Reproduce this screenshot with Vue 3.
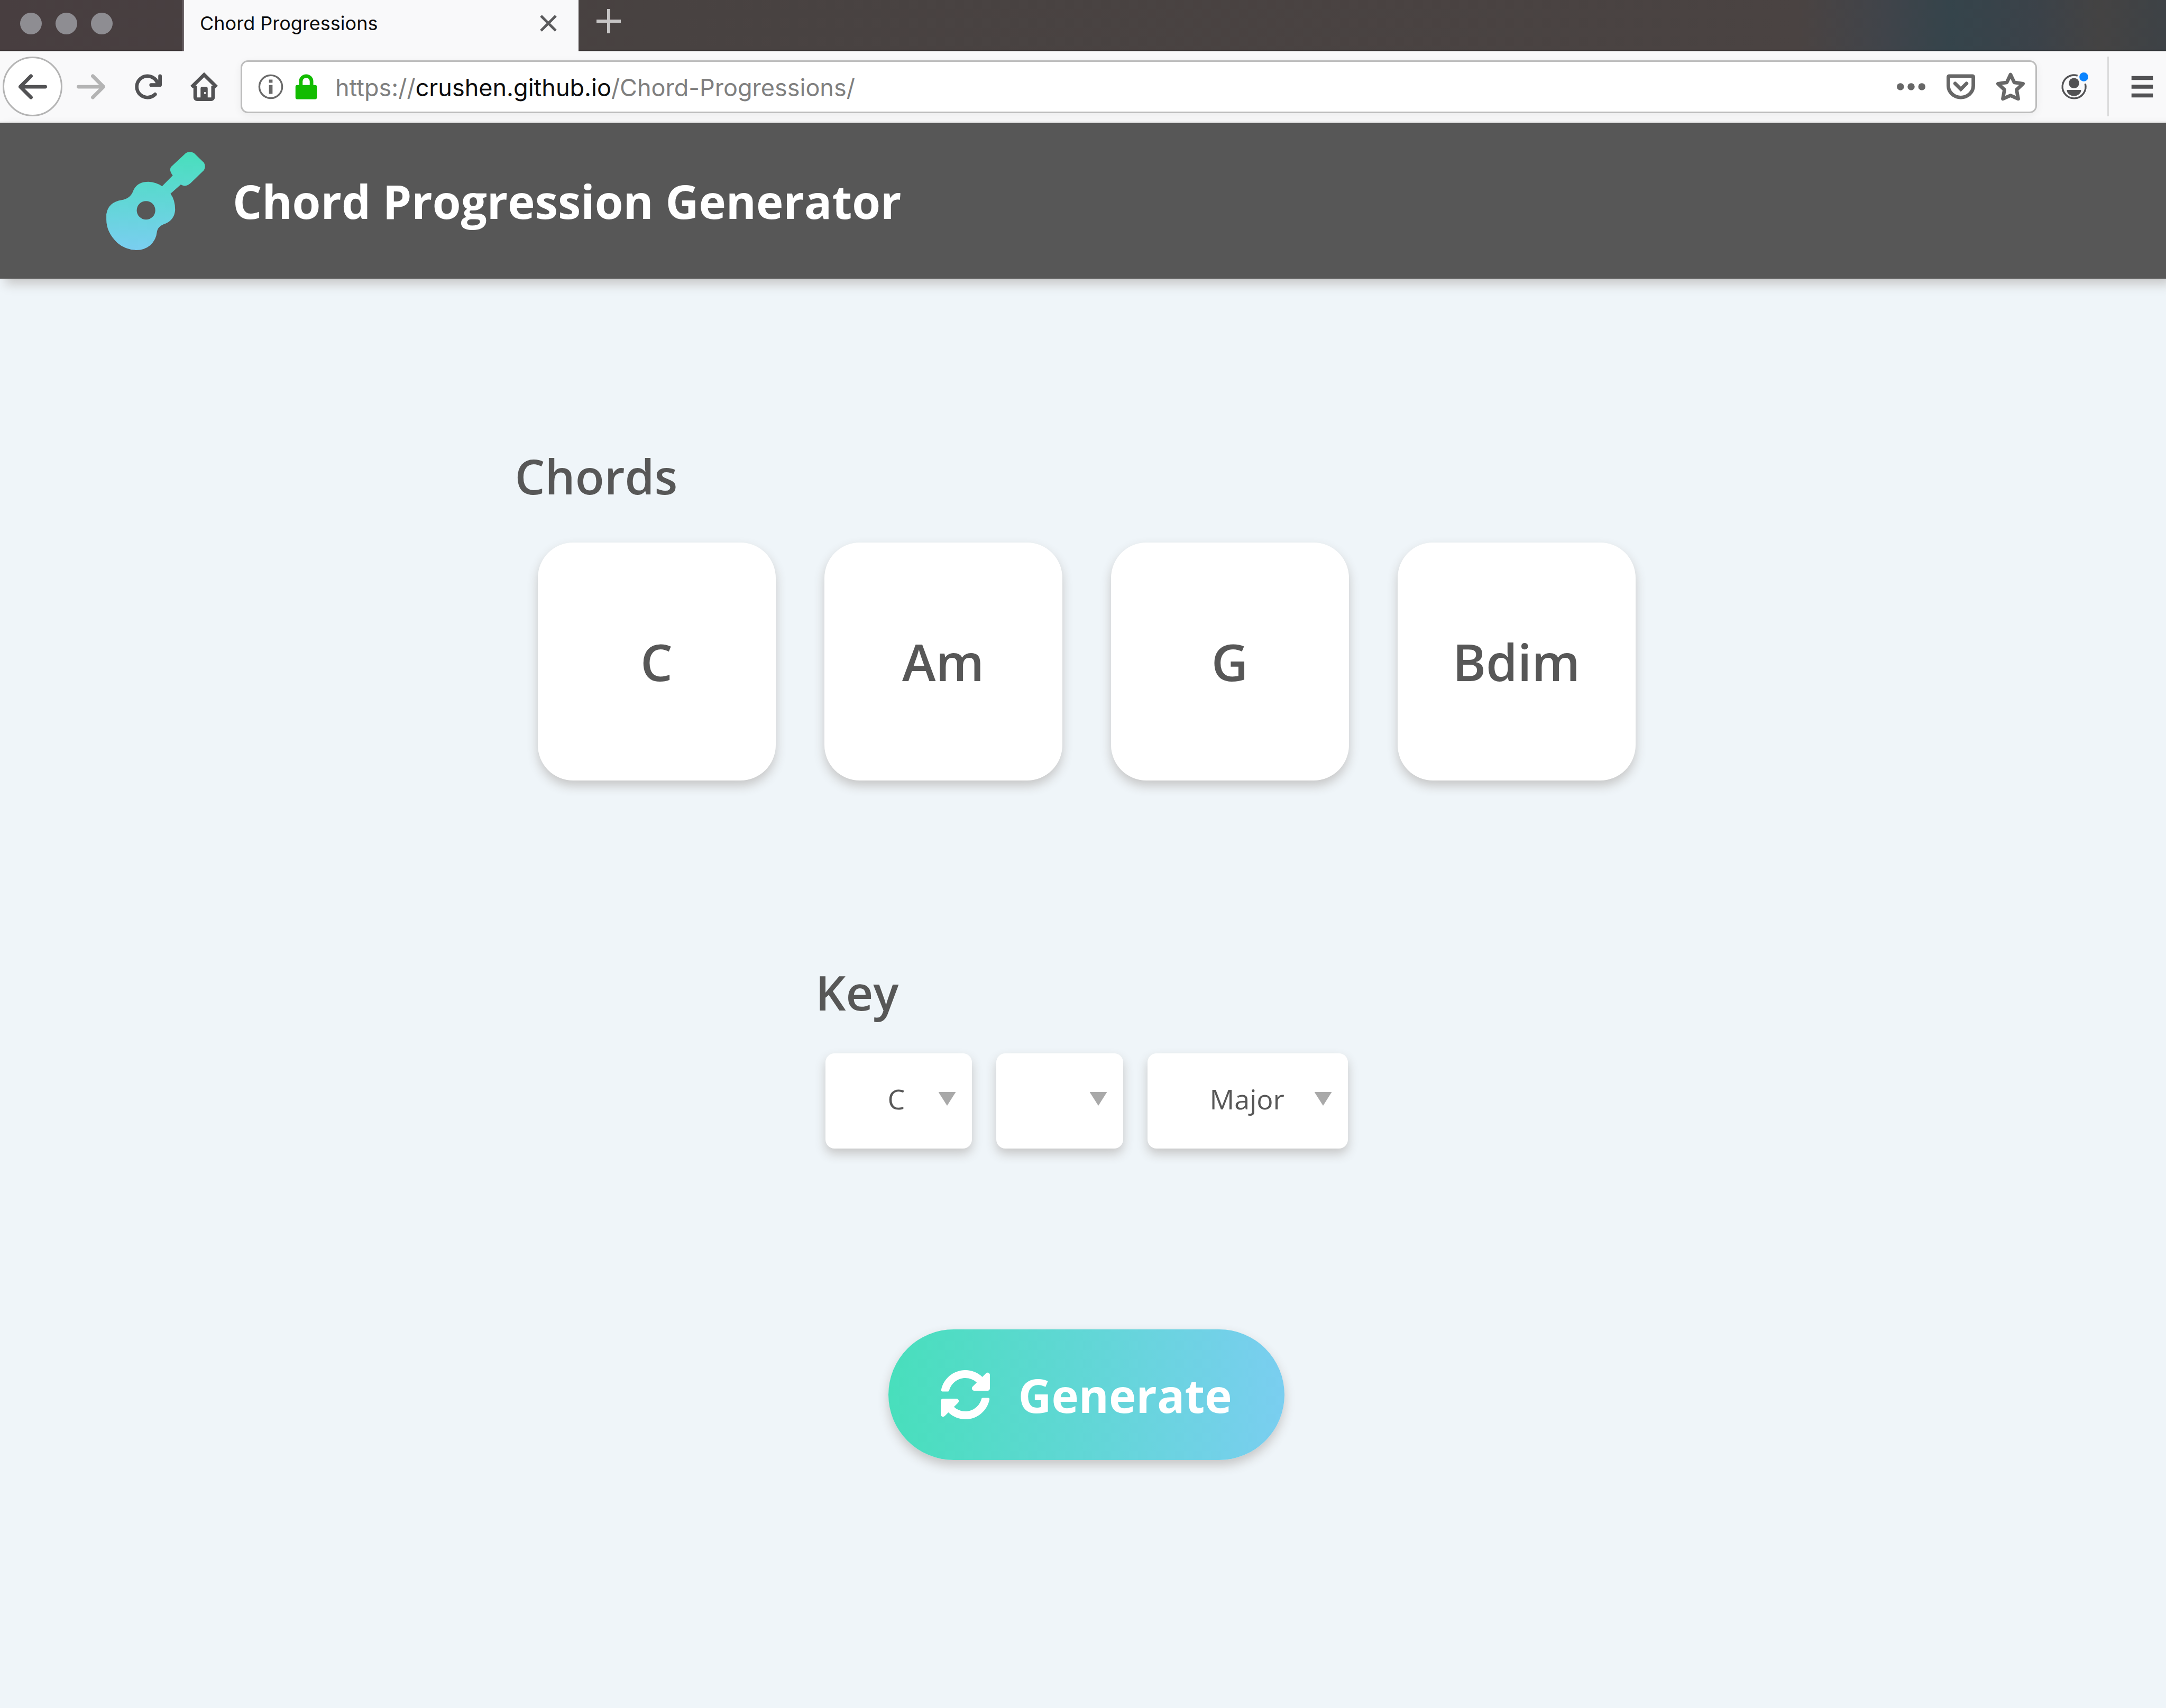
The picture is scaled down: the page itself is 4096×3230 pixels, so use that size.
<script setup>
import { ref } from 'vue'

const chords = ref(['C', 'Am', 'G', 'Bdim'])
const note = ref('C')
const accidental = ref('')
const mode = ref('Major')

const notes = ['A', 'B', 'C', 'D', 'E', 'F', 'G']
const accidentals = ['', '♯', '♭']
const modes = ['Major', 'Minor']
</script>

<template>
  <div class="window">
    <div class="tabbar">
      <div class="lights"><span></span><span></span><span></span></div>
      <div class="tab">
        <span class="tab-title">Chord Progressions</span>
        <button class="plain" aria-label="Close tab">
          <svg class="close" viewBox="0 0 34 34"><path d="M3 3 31 31M31 3 3 31" /></svg>
        </button>
      </div>
      <button class="plain add" aria-label="New tab">
        <svg class="plus" viewBox="0 0 48 48"><path d="M24 1V47M1 24H47" /></svg>
      </button>
    </div>

    <div class="toolbar">
      <button class="plain back" aria-label="Back">
        <svg class="icon" viewBox="0 0 16 16"><path d="M15 7H3.414l4.293-4.293a1 1 0 0 0-1.414-1.414l-6 6a1 1 0 0 0 0 1.414l6 6a1 1 0 0 0 1.414-1.414L3.414 9H15a1 1 0 0 0 0-2z" /></svg>
      </button>
      <button class="plain tool dim" aria-label="Forward">
        <svg class="icon" viewBox="0 0 16 16"><path d="M1 7h11.586L8.293 2.707a1 1 0 0 1 1.414-1.414l6 6a1 1 0 0 1 0 1.414l-6 6a1 1 0 0 1-1.414-1.414L12.586 9H1a1 1 0 0 1 0-2z" /></svg>
      </button>
      <button class="plain tool" aria-label="Reload">
        <svg class="icon" viewBox="0 0 16 16"><path d="M15 1a1 1 0 0 0-1 1v2.418A6.995 6.995 0 1 0 8 15a6.954 6.954 0 0 0 4.95-2.05 1 1 0 0 0-1.414-1.414A5.019 5.019 0 1 1 12.549 6H10a1 1 0 0 0 0 2h5a1 1 0 0 0 1-1V2a1 1 0 0 0-1-1z" /></svg>
      </button>
      <button class="plain tool" aria-label="Home">
        <svg class="icon" viewBox="0 0 16 16">
          <path class="line" d="M1 8.200 8 1.300 15 8.200M3 7.500V14a1 1 0 0 0 1 1h8a1 1 0 0 0 1-1V7.500" />
          <path fill-rule="evenodd" d="M6 15V9a1 1 0 0 1 1-1h2a1 1 0 0 1 1 1v6zM8 11v1h1v-1z" />
        </svg>
      </button>

      <div class="address">
        <svg class="icon info" viewBox="0 0 16 16">
          <circle cx="8" cy="8" r="6.400" />
          <path d="M8 4v1.800M8 7v5" />
        </svg>
        <svg class="icon lock" viewBox="0 0 16 16">
          <path d="M2 8a1 1 0 0 1 1-1h1V5a4 4 0 0 1 8 0v2h1a1 1 0 0 1 1 1v6a1 1 0 0 1-1 1H3a1 1 0 0 1-1-1zM6 7h4V5a2 2 0 0 0-4 0z" fill-rule="evenodd" />
        </svg>
        <div class="url" role="textbox" aria-label="Address" tabindex="0">https://<b>crushen.github.io</b>/Chord-Progressions/</div>
        <svg class="icon soft" viewBox="0 0 16 16"><circle cx="2" cy="8" r="2" /><circle cx="8" cy="8" r="2" /><circle cx="14" cy="8" r="2" /></svg>
        <svg class="icon soft" viewBox="0 0 16 16">
          <path class="line" d="M1.500 2h13a.5.5 0 0 1 .5.5V7.500a7 6.500 0 0 1-14 0V2.500a.5.5 0 0 1 .5-.5z" />
          <path class="line" d="M4.800 6.200 8 9.400l3.200-3.200" stroke-linecap="round" />
        </svg>
        <svg class="icon soft" viewBox="0 0 16 16">
          <path class="line" d="M8 1.200 10.100 5.600 15 6.300 11.400 9.700 12.300 14.800 8 12.900 3.700 14.800 4.600 9.700 1 6.300 5.900 5.600Z" stroke-linejoin="round" />
        </svg>
      </div>

      <button class="plain tool account" aria-label="Account">
        <svg class="icon" viewBox="0 0 16 16">
          <path class="thin" d="M10 1.800A6.500 6.500 0 1 0 14.300 6.300" />
          <circle cx="8" cy="6" r="2.900" />
          <path d="M4 9.800h8c0 2-1.800 3.400-4 3.400S4 11.800 4 9.800z" />
          <circle class="dot" cx="13.500" cy="2.500" r="2.500" />
        </svg>
      </button>
      <span class="rule"></span>
      <button class="plain menu" aria-label="Menu">
        <svg class="icon" viewBox="0 0 16 16"><path d="M2 2h12v2.200H2zM2 6.900h12v2.200H2zM2 11.800h12V14H2z" /></svg>
      </button>
    </div>

    <header class="header">
      <svg class="logo" viewBox="156 117 702 699">
        <defs>
          <linearGradient id="sea" x1="0" y1="0" x2="0" y2="1">
            <stop offset="0" stop-color="#48dfbc" />
            <stop offset="1" stop-color="#7acef0" />
          </linearGradient>
        </defs>
        <path fill="url(#sea)" fill-rule="evenodd" d="M722 125Q748 110 778 125L850 195Q865 222 850 248L755 340Q720 372 685 350L612 415Q645 460 645 530Q640 600 575 628Q520 645 515 690Q510 740 470 780Q425 816 370 816Q290 812 235 765Q156 690 156 600V560Q170 475 265 460Q325 450 345 400Q370 330 455 330Q510 332 552 362L628 285Q600 250 615 225ZM372 533a66 66 0 0 0 132 0a66 66 0 0 0-132 0z" />
      </svg>
      <h1>Chord Progression Generator</h1>
    </header>

    <main class="main">
      <section class="chords">
        <h2>Chords</h2>
        <ul class="cards">
          <li v-for="chord in chords" :key="chord">{{ chord }}</li>
        </ul>
      </section>

      <section class="key">
        <h2>Key</h2>
        <div class="selects">
          <label class="pick note">
            <select v-model="note" aria-label="Note"><option v-for="n in notes" :key="n">{{ n }}</option></select>
          </label>
          <label class="pick accidental">
            <select v-model="accidental" aria-label="Accidental"><option v-for="a in accidentals" :key="a">{{ a }}</option></select>
          </label>
          <label class="pick mode">
            <select v-model="mode" aria-label="Mode"><option v-for="m in modes" :key="m">{{ m }}</option></select>
          </label>
        </div>
      </section>

      <button class="generate">
        <svg viewBox="8 8 496 496"><path d="M370.72 133.28C339.458 104.008 298.888 87.962 255.848 88c-77.458.068-144.328 53.178-162.791 126.85-1.344 5.363-6.122 9.15-11.651 9.15H24.103c-7.498 0-13.194-6.807-11.807-14.176C33.933 94.924 134.813 8 256 8c66.448 0 126.791 26.136 171.315 68.685L463.03 40.97C478.149 25.851 504 36.559 504 57.941V192c0 13.255-10.745 24-24 24H345.941c-21.382 0-32.09-25.851-16.971-40.971l41.75-41.749zM32 296h134.059c21.382 0 32.09 25.851 16.971 40.971l-41.75 41.75c31.262 29.273 71.835 45.319 114.876 45.28 77.418-.07 144.315-53.144 162.787-126.849 1.344-5.363 6.122-9.15 11.651-9.15h57.304c7.498 0 13.194 6.807 11.807 14.176C478.067 417.076 377.187 504 256 504c-66.448 0-126.791-26.136-171.315-68.685L48.97 471.03C33.851 486.149 8 475.441 8 454.059V320c0-13.255 10.745-24 24-24z" /></svg>
        <span>Generate</span>
      </button>
    </main>
  </div>
</template>

<style>
html, body {
  margin: 0;
  background: #eff5f9;
}
</style>

<style scoped>
.window {
  min-height: 100vh;
  display: flex;
  flex-direction: column;
  overflow: hidden;
  color: #575757;
  font-family: "Open Sans", "Noto Sans", sans-serif;
}
.plain {
  display: flex;
  align-items: center;
  justify-content: center;
  padding: 0;
  border: 0;
  background: none;
  color: #525254;
}
svg { display: block; flex: none; }

.tabbar {
  display: flex;
  height: 97px;
  background: linear-gradient(90deg, #483e40 0%, #484241 30%, #4a4342 83%, #40444a 87%, #35444b 90%, #3b4249 94%, #444343 97%, #3d4246 100%);
  box-shadow: inset 0 -3px #0000003d;
}
.lights {
  display: flex;
  align-items: center;
  gap: 26px;
  width: 345px;
  box-sizing: border-box;
  padding: 0 0 9px 38px;
}
.lights span {
  width: 41px;
  height: 41px;
  border-radius: 50%;
  background: #8e8d92;
}
.tab {
  display: flex;
  align-items: center;
  justify-content: space-between;
  width: 749px;
  box-sizing: border-box;
  padding: 0 40px 9px 30px;
  border-left: 3px solid #6c6468;
  background: #f9f9fa;
}
.tab-title {
  color: #0c0c0d;
  font: 36px/48px Inter, sans-serif;
}
.close { width: 34px; height: 34px; fill: none; stroke: #5a5a5c; stroke-width: 5px; }
.add { padding: 0 33px 17px; }
.plus { width: 48px; height: 48px; fill: none; stroke: #c6c4c4; stroke-width: 6px; }

.toolbar {
  display: flex;
  align-items: center;
  height: 133px;
  background: #f9f9fa;
  border-bottom: 3px solid #dfdfdf;
}
.icon { width: 54px; height: 54px; fill: currentColor; }
.line { fill: none; stroke: currentColor; stroke-width: 2px; }
.thin { fill: none; stroke: currentColor; stroke-width: 1px; }
.back {
  width: 113px;
  height: 113px;
  box-sizing: border-box;
  margin-left: 5px;
  border: 3px solid #b4b4b4;
  border-radius: 50%;
  background: #fff;
}
.tool { width: 107px; height: 107px; }
.dim { color: #b4b4b4; }
.address {
  flex: 1;
  display: flex;
  align-items: center;
  height: 100px;
  box-sizing: border-box;
  margin: 0 16px;
  padding: 0 20px 0 27px;
  gap: 40px;
  border: 3px solid #bdbdbd;
  border-radius: 14px;
  background: #fff;
  box-shadow: 0 4px 16px #0000000f;
}
.info { margin-right: -27px; fill: none; stroke: #6a6a6a; stroke-width: 1px; }
.info path { stroke-width: 2px; }
.lock { margin-right: -12px; fill: #12bc00; }
.soft { color: #676767; }
.url {
  flex: 1;
  padding-top: 4px;
  color: #7f7f7f;
  font: 45px/60px Inter, sans-serif;
}
.url b { color: #0c0c0d; font-weight: 400; }
.account { margin-right: 10px; }
.dot { fill: #0a84ff; }
.rule {
  width: 3px;
  height: 113px;
  background: #dcdcdc;
}
.menu { width: 108px; height: 107px; box-sizing: border-box; padding-left: 18px; }

.header {
  display: flex;
  align-items: center;
  height: 294px;
  padding-left: 201px;
  gap: 52px;
  background: #575757;
  color: #fff;
  box-shadow: 10px 10px 20px #c6c6c6;
}
.logo { width: 187px; height: 186px; }
h1, h2 { margin: 0; line-height: 120px; }
h1 { font-size: 87px; font-weight: 700; }
h2 { font-size: 90px; font-weight: 600; }

.main {
  display: flex;
  flex-direction: column;
  align-items: center;
  padding: 313px 0 160px 13px;
}
.chords { width: 2162px; }
.cards {
  display: flex;
  justify-content: center;
  gap: 92px;
  margin: 0;
  padding: 66px 0 0;
  list-style: none;
}
.cards li {
  display: flex;
  align-items: center;
  justify-content: center;
  width: 450px;
  height: 450px;
  border-radius: 67px;
  background: #fff;
  box-shadow: 0 10px 20px #c6c6c6;
  font-size: 96px;
  line-height: 120px;
  font-weight: 600;
}
.key { width: 1025px; margin-top: 340px; }
.selects {
  display: flex;
  justify-content: center;
  gap: 46px;
  padding-top: 56px;
}
.pick {
  position: relative;
  display: block;
}
.pick::after {
  content: "";
  position: absolute;
  right: 30px;
  top: 73px;
  width: 33px;
  height: 26px;
  background: #a9a9a9;
  clip-path: polygon(0 0, 100% 0, 50% 100%);
  pointer-events: none;
}
.pick select {
  display: block;
  width: 100%;
  height: 180px;
  padding: 0 0 8px 118px;
  border: 0;
  border-radius: 17px;
  appearance: none;
  background: #fff;
  box-shadow: 0 10px 20px #c6c6c6;
  color: #575757;
  font: 52px/72px "Open Sans", "Noto Sans", sans-serif;
}
.note { width: 277px; }
.accidental { width: 240px; }
.mode { width: 379px; }

.generate {
  display: flex;
  align-items: center;
  gap: 53px;
  height: 247px;
  margin-top: 342px;
  padding: 0 99px;
  border: 0;
  border-radius: 124px;
  background: linear-gradient(90deg, #48dfbc, #7acef0);
  box-shadow: 0 10px 20px #c6c6c6;
  color: #fff;
  font: 700 87px/120px "Open Sans", "Noto Sans", sans-serif;
}
.generate svg { width: 93px; height: 93px; fill: #fff; }
</style>
